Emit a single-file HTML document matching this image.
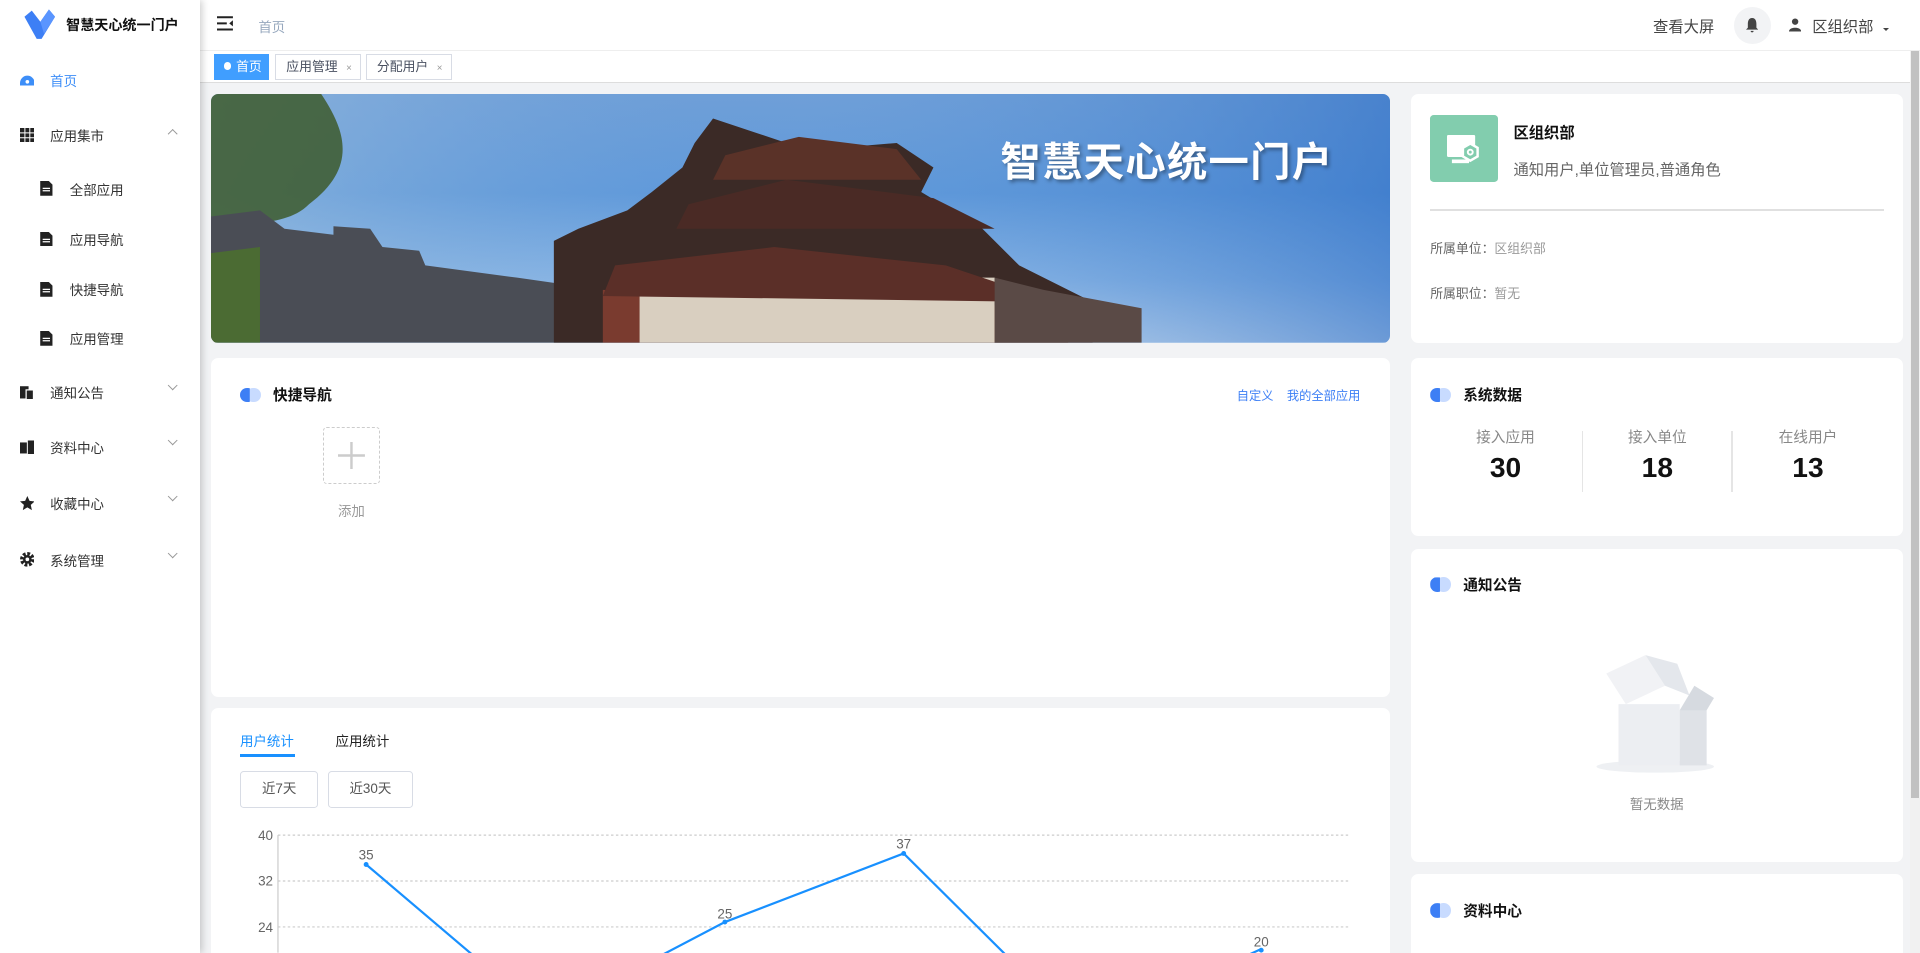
<!DOCTYPE html>
<html><head><meta charset="utf-8"><style>
*{box-sizing:border-box;margin:0;padding:0}
html,body{width:1920px;height:953px;overflow:hidden;background:#f2f3f5}
body{font-family:"Liberation Sans","Noto Sans CJK SC",sans-serif;color:#333}
#root{zoom:1.22449;width:1568px;height:778px;position:relative;overflow:hidden}
.side{position:absolute;left:0;top:0;width:163px;height:778px;background:#fff;box-shadow:2px 0 6px rgba(0,0,0,.2);z-index:3}
.logo{position:absolute;left:18px;top:6px}
.brand{position:absolute;left:54px;top:12px;font-size:11.5px;font-weight:bold;color:#111}
.mi{position:absolute;left:16px;font-size:11px;color:#333;display:flex;align-items:center}
.mi .ic{width:12px;height:12px;margin-right:13px;display:inline-block}
.sub{left:32px}
.arr{position:absolute;left:138px;width:6px;height:6px;border-right:1px solid #999;border-bottom:1px solid #999;transform:rotate(45deg)}
.top{position:absolute;left:163px;top:0;right:0;height:42px;background:#fff;border-bottom:1px solid #eee}
.tags{position:absolute;left:163px;top:42px;right:0;height:26px;background:#fff;border-bottom:1px solid #ddd}
.tag{position:absolute;top:2px;height:21px;border:1px solid #d8dce5;font-size:10.5px;line-height:19px;padding-left:8px;color:#495060}
.card{position:absolute;background:#fff;border-radius:6px}
.h{position:absolute;font-size:12px;font-weight:bold;color:#111;display:flex;align-items:center}
.dot{width:18px;height:12px;position:relative;margin-right:9px}
.dot:before{content:"";position:absolute;left:5px;top:0;width:12px;height:12px;border-radius:50%;background:#c8dbff}
.dot:after{content:"";position:absolute;left:0;top:0;width:12px;height:12px;border-radius:50%;background:#3d7ff5;clip-path:inset(0 4px 0 0)}
.scroll{position:absolute;right:0;top:42px;width:8px;height:736px;background:#f1f1f1}
.scroll:after{content:"";position:absolute;left:1px;top:0;width:6px;height:610px;background:#c1c1c1}
</style></head><body><div id="root">
<div class="side">
 <svg class="logo" width="28" height="28" viewBox="0 0 28 28"><path d="M2 8 L8 3 L15 12 L22 2 L27 8 L16 26 L12 26 Z" fill="#3d7ff5"/><path d="M15 12 L22 2 L27 8 L18 22Z" fill="#5a95ff"/></svg>
 <div class="brand">智慧天心统一门户</div>
 <div class="mi" style="top:57px;color:#3d8ef8"><svg class="ic" viewBox="0 0 12 12"><path d="M0 9 A6 6 0 0 1 12 9 L12 11 L0 11Z" fill="#3d8ef8"/><circle cx="6" cy="8" r="1.5" fill="#fff"/></svg>首页</div>
 <div class="mi" style="top:102px"><svg class="ic" viewBox="0 0 12 12"><rect width="12" height="12" fill="#222"/><path d="M4 0V12M8 0V12M0 4H12M0 8H12" stroke="#fff" stroke-width=".8"/></svg>应用集市</div>
 <div class="arr" style="top:106px;transform:rotate(-135deg)"></div>
 <div class="mi sub" style="top:146px"><svg class="ic" viewBox="0 0 12 12"><path d="M1 0H8L11 3V12H1Z" fill="#222"/><path d="M3 6H9M3 8H9" stroke="#fff"/></svg>全部应用</div>
 <div class="mi sub" style="top:187px"><svg class="ic" viewBox="0 0 12 12"><path d="M1 0H8L11 3V12H1Z" fill="#222"/><path d="M3 6H9M3 8H9" stroke="#fff"/></svg>应用导航</div>
 <div class="mi sub" style="top:228px"><svg class="ic" viewBox="0 0 12 12"><path d="M1 0H8L11 3V12H1Z" fill="#222"/><path d="M3 6H9M3 8H9" stroke="#fff"/></svg>快捷导航</div>
 <div class="mi sub" style="top:268px"><svg class="ic" viewBox="0 0 12 12"><path d="M1 0H8L11 3V12H1Z" fill="#222"/><path d="M3 6H9M3 8H9" stroke="#fff"/></svg>应用管理</div>
 <div class="mi" style="top:312px"><svg class="ic" viewBox="0 0 12 12"><rect x="0" y="1" width="7" height="10" fill="#222"/><rect x="5" y="4" width="6" height="8" fill="#222" stroke="#fff"/></svg>通知公告</div>
 <div class="arr" style="top:312px"></div>
 <div class="mi" style="top:357px"><svg class="ic" viewBox="0 0 12 12"><rect x="0" y="2" width="8" height="9" fill="#222"/><rect x="6" y="0" width="6" height="12" fill="#222" stroke="#fff" stroke-width=".8"/></svg>资料中心</div>
 <div class="arr" style="top:357px"></div>
 <div class="mi" style="top:403px"><svg class="ic" viewBox="0 0 12 12"><path d="M6 0L7.8 4 12 4.4 8.8 7.2 9.7 11.5 6 9.3 2.3 11.5 3.2 7.2 0 4.4 4.2 4Z" fill="#222"/></svg>收藏中心</div>
 <div class="arr" style="top:403px"></div>
 <div class="mi" style="top:449px"><svg class="ic" viewBox="0 0 12 12"><circle cx="6" cy="6" r="4.5" fill="none" stroke="#222" stroke-width="3" stroke-dasharray="2.2 1.3"/><circle cx="6" cy="6" r="3.5" fill="#222"/><circle cx="6" cy="6" r="1.5" fill="#fff"/></svg>系统管理</div>
 <div class="arr" style="top:449px"></div>
</div>
<div class="top">
 <svg style="position:absolute;left:14px;top:13px" width="14" height="12" viewBox="0 0 14 12"><path d="M0 1H13M0 6H8M0 11H13" stroke="#222" stroke-width="1.6"/><path d="M13 3.5L10 6 13 8.5Z" fill="#222"/></svg>
 <div style="position:absolute;left:48px;top:13px;font-size:11px;color:#97a8be">首页</div>
 <div style="position:absolute;left:1187px;top:12px;font-size:12.5px;color:#444">查看大屏</div>
 <div style="position:absolute;left:1253px;top:6px;width:30px;height:30px;border-radius:50%;background:#f2f3f5"><svg style="position:absolute;left:10px;top:9px" width="10" height="12" viewBox="0 0 10 12"><path d="M5 0C2 0 1.5 3 1.5 5V8L0 9.5H10L8.5 8V5C8.5 3 8 0 5 0Z M3.8 10.5H6.2A1.2 1.2 0 0 1 3.8 10.5Z" fill="#444"/></svg></div>
 <svg style="position:absolute;left:1298px;top:15px" width="10" height="11" viewBox="0 0 10 11"><circle cx="5" cy="3" r="2.6" fill="#444"/><path d="M0 11C0 7 10 7 10 11Z" fill="#444"/></svg>
 <div style="position:absolute;left:1317px;top:12px;font-size:12.5px;color:#444">区组织部</div>
 <div style="position:absolute;left:1375px;top:23px;border:3px solid transparent;border-top-color:#444"></div>
</div>
<div class="tags">
 <div class="tag" style="left:12px;width:45px;background:#409eff;border-color:#409eff;color:#fff;padding-left:7px"><span style="display:inline-block;width:6px;height:6px;border-radius:50%;background:#fff;margin-right:4px;vertical-align:1px"></span>首页</div>
 <div class="tag" style="left:62px;width:70px">应用管理 <span style="font-size:8px;color:#999;margin-left:4px">×</span></div>
 <div class="tag" style="left:136px;width:70px">分配用户 <span style="font-size:8px;color:#999;margin-left:4px">×</span></div>
</div>
<div class="scroll"></div>
<div class="card" style="left:172px;top:77px;width:963px;height:203px;overflow:hidden;background:linear-gradient(180deg,#6f9fd8 0%,#5f99da 40%,#8db8e6 75%,#c7dbef 100%)">
 <svg width="963" height="203" viewBox="0 0 963 203" style="position:absolute;left:0;top:0">
  <defs><linearGradient id="sk" x1="0" x2="1"><stop offset="0" stop-color="#9fc0dd" stop-opacity=".6"/><stop offset=".5" stop-color="#5f97d8" stop-opacity="0"/><stop offset="1" stop-color="#2f6fc6" stop-opacity=".6"/></linearGradient></defs>
  <rect width="963" height="203" fill="url(#sk)"/>
  <path d="M0 0 H90 C110 30 120 60 80 90 C60 110 30 100 0 120Z" fill="#3d5a2b" opacity=".85"/>
  <path d="M0 100 L40 95 L60 110 L100 115 L100 108 L130 110 L140 125 L170 128 L175 140 L250 150 L320 160 L320 203 L0 203Z" fill="#4a4d55"/>
  <path d="M0 130 L40 125 L40 203 L0 203Z" fill="#4b6b33"/>
  <path d="M280 120 L300 110 L340 95 L360 80 L385 60 L395 40 L410 20 L440 30 L470 40 L500 45 L560 40 L590 60 L580 80 L630 110 L660 140 L720 170 L720 203 L280 203Z" fill="#3b2a26"/>
  <path d="M320 160 L700 175 L700 203 L320 203Z" fill="#7a3b2f"/>
  <path d="M350 150 H640 V203 H350Z" fill="#d9cfc0"/>
  <path d="M330 140 L460 125 L600 140 L690 170 L320 165Z" fill="#5b2f28"/>
  <path d="M390 90 L470 70 L590 85 L640 110 L380 110Z" fill="#4a2a25"/>
  <path d="M420 50 L480 35 L560 45 L580 70 L410 70Z" fill="#5a3228"/>
  <path d="M640 150 L680 160 L760 175 L760 203 L640 203Z" fill="#5a4a46"/>
 </svg>
 <div style="position:absolute;left:645px;top:28px;font-size:33px;font-weight:bold;color:#fff;letter-spacing:1px;text-shadow:2px 2px 3px rgba(0,0,0,.35)">智慧天心统一门户</div>
</div>
<div class="card" style="left:1152px;top:77px;width:402px;height:203px">
 <div style="position:absolute;left:16px;top:17px;width:55px;height:55px;border-radius:3px;background:#82cdae">
  <svg style="position:absolute;left:14px;top:16px" width="28" height="26" viewBox="0 0 28 26"><rect x="0" y="0" width="23" height="18" rx="1" fill="#fff"/><rect x="4" y="20" width="14" height="3" fill="#fff"/><path d="M19 7 L25 10.5 V17.5 L19 21 L13 17.5 V10.5Z" fill="#82cdae" stroke="#fff" stroke-width="2"/><circle cx="19" cy="14" r="2" fill="none" stroke="#fff" stroke-width="1.6"/></svg>
 </div>
 <div style="position:absolute;left:84px;top:22px;font-size:12.5px;font-weight:bold;color:#111">区组织部</div>
 <div style="position:absolute;left:84px;top:52px;font-size:12.5px;color:#666">通知用户,单位管理员,普通角色</div>
 <div style="position:absolute;left:16px;top:94px;width:371px;height:1px;background:#e0e0e0"></div>
 <div style="position:absolute;left:16px;top:117px;font-size:10.5px;color:#666">所属单位：<span style="color:#999">区组织部</span></div>
 <div style="position:absolute;left:16px;top:154px;font-size:10.5px;color:#666">所属职位：<span style="color:#999">暂无</span></div>
</div>
<div class="card" style="left:172px;top:292px;width:963px;height:277px">
 <div class="h" style="left:24px;top:22px"><span class="dot"></span>快捷导航</div>
 <div style="position:absolute;left:838px;top:23px;font-size:10px;color:#3d7ff5">自定义</div>
 <div style="position:absolute;left:879px;top:23px;font-size:10px;color:#3d7ff5">我的全部应用</div>
 <div style="position:absolute;left:92px;top:57px;width:46px;height:46px;border:1.5px dashed #ccc;border-radius:3px"><svg style="position:absolute;left:11px;top:11px" width="22" height="22"><path d="M11 0V22M0 11H22" stroke="#ccc" stroke-width="2"/></svg></div>
 <div style="position:absolute;left:104px;top:116px;font-size:11px;color:#999">添加</div>
</div>
<div class="card" style="left:172px;top:578px;width:963px;height:200px;border-radius:6px 6px 0 0">
 <div style="position:absolute;left:24px;top:18px;font-size:11px;color:#1890ff">用户统计</div>
 <div style="position:absolute;left:24px;top:38px;width:45px;height:2px;background:#1890ff"></div>
 <div style="position:absolute;left:102px;top:18px;font-size:11px;color:#222">应用统计</div>
 <div style="position:absolute;left:24px;top:52px;width:64px;height:30px;border:1px solid #d8dce5;border-radius:3px;font-size:11px;color:#555;text-align:center;line-height:28px">近7天</div>
 <div style="position:absolute;left:96px;top:52px;width:69px;height:30px;border:1px solid #d8dce5;border-radius:3px;font-size:11px;color:#555;text-align:center;line-height:28px">近30天</div>
</div>
<svg style="position:absolute;left:0;top:0" width="1568" height="778">
 <g stroke="#ccc" stroke-dasharray="2 2" stroke-width="1"><path d="M227 682H1103M227 719.5H1103M227 757H1103"/></g>
 <path d="M227 682V778" stroke="#ccc"/>
 <g font-family="Liberation Sans" font-size="11" fill="#666" text-anchor="end"><text x="223" y="686">40</text><text x="223" y="723">32</text><text x="223" y="761">24</text></g>
 <path d="M299 706 L445 830 L592 753 L738 697 L884 842 L1030 775" fill="none" stroke="#1890ff" stroke-width="1.8"/>
 <g fill="#1890ff"><circle cx="299" cy="706" r="2"/><circle cx="592" cy="753" r="2"/><circle cx="738" cy="697" r="2"/><circle cx="1030" cy="776" r="2"/></g>
 <g font-family="Liberation Sans" font-size="11" fill="#666" text-anchor="middle"><text x="299" y="702">35</text><text x="592" y="750">25</text><text x="738" y="693">37</text><text x="1030" y="773">20</text></g>
</svg>
<div class="card" style="left:1152px;top:292px;width:402px;height:146px">
 <div class="h" style="left:16px;top:22px"><span class="dot"></span>系统数据</div>
 <div style="position:absolute;left:16px;top:56px;width:123px;text-align:center;font-size:12px;color:#888">接入应用<div style="font-size:23px;font-weight:bold;color:#111;margin-top:4px">30</div></div>
 <div style="position:absolute;left:140px;top:60px;width:1px;height:50px;background:#e5e5e5"></div>
 <div style="position:absolute;left:140px;top:56px;width:123px;text-align:center;font-size:12px;color:#888">接入单位<div style="font-size:23px;font-weight:bold;color:#111;margin-top:4px">18</div></div>
 <div style="position:absolute;left:262px;top:60px;width:1px;height:50px;background:#e5e5e5"></div>
 <div style="position:absolute;left:263px;top:56px;width:123px;text-align:center;font-size:12px;color:#888">在线用户<div style="font-size:23px;font-weight:bold;color:#111;margin-top:4px">13</div></div>
</div>
<div class="card" style="left:1152px;top:448px;width:402px;height:256px">
 <div class="h" style="left:16px;top:21px"><span class="dot"></span>通知公告</div>
 <svg style="position:absolute;left:150px;top:82px" width="100" height="104" viewBox="0 0 100 104"><ellipse cx="50" cy="96" rx="48" ry="5" fill="#eef0f3"/><path d="M20 45 L70 45 L70 95 L20 95Z" fill="#eceef2"/><path d="M70 50 L92 45 L92 95 L70 95Z" fill="#dfe2e7"/><path d="M10 20 L42 5 L58 30 L26 45Z" fill="#f1f2f5"/><path d="M42 5 L68 12 L78 38 L58 30Z" fill="#e4e7ec"/><path d="M70 50 L82 30 L98 40 L92 50Z" fill="#d6dae0"/></svg>
 <div style="position:absolute;left:0;width:402px;top:200px;text-align:center;font-size:11px;color:#888">暂无数据</div>
</div>
<div class="card" style="left:1152px;top:714px;width:402px;height:64px;border-radius:6px 6px 0 0">
 <div class="h" style="left:16px;top:21px"><span class="dot"></span>资料中心</div>
</div>
</div></body></html>
